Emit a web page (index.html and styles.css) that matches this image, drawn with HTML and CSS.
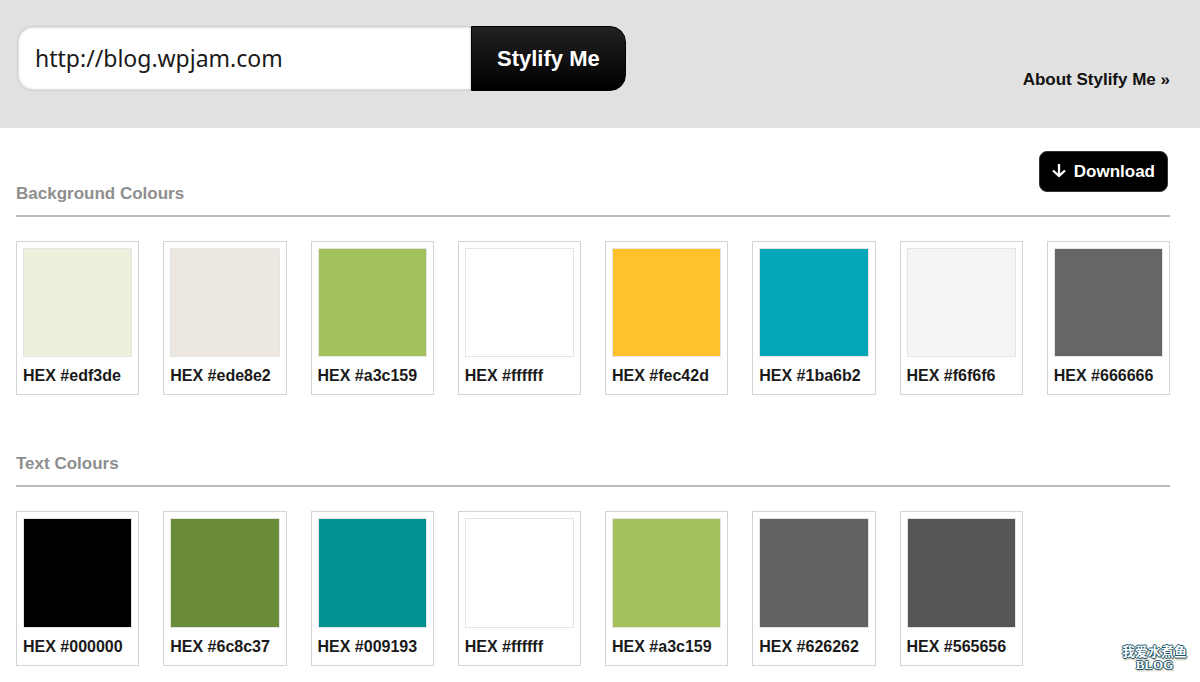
FILE: index.html
```html
<!DOCTYPE html>
<html lang="en">
<head>
<meta charset="utf-8">
<title>Stylify Me</title>
<link rel="stylesheet" href="styles.css">
</head>
<body>
<header class="header">
  <form class="search">
    <input class="search-input" type="text" aria-label="Website address" value="http://blog.wpjam.com">
    <button class="search-button" type="button">Stylify Me</button>
  </form>
  <a class="about" href="#">About Stylify Me »</a>
</header>
<main class="main">
  <section class="section">
    <div class="section-head">
      <h2 class="section-title">Background Colours</h2>
      <button class="download" type="button">
        <svg class="download-icon" width="14" height="16" viewBox="0 0 14 16" aria-hidden="true"><path d="M7 0v12M1 6.500L7 12l6-5.500" fill="none" stroke="#fff" stroke-width="2.300"/></svg>
        Download
      </button>
    </div>
    <ul class="swatches">
      <li class="card"><div class="colour c-edf3de"></div><span class="label">HEX #edf3de</span></li>
      <li class="card"><div class="colour c-ede8e2"></div><span class="label">HEX #ede8e2</span></li>
      <li class="card"><div class="colour c-a3c159"></div><span class="label">HEX #a3c159</span></li>
      <li class="card"><div class="colour c-ffffff"></div><span class="label">HEX #ffffff</span></li>
      <li class="card"><div class="colour c-fec42d"></div><span class="label">HEX #fec42d</span></li>
      <li class="card"><div class="colour c-1ba6b2"></div><span class="label">HEX #1ba6b2</span></li>
      <li class="card"><div class="colour c-f6f6f6"></div><span class="label">HEX #f6f6f6</span></li>
      <li class="card"><div class="colour c-666666"></div><span class="label">HEX #666666</span></li>
    </ul>
  </section>
  <section class="section">
    <div class="section-head">
      <h2 class="section-title">Text Colours</h2>
    </div>
    <ul class="swatches">
      <li class="card"><div class="colour c-000000"></div><span class="label">HEX #000000</span></li>
      <li class="card"><div class="colour c-6c8c37"></div><span class="label">HEX #6c8c37</span></li>
      <li class="card"><div class="colour c-009193"></div><span class="label">HEX #009193</span></li>
      <li class="card"><div class="colour c-ffffff"></div><span class="label">HEX #ffffff</span></li>
      <li class="card"><div class="colour c-a3c159"></div><span class="label">HEX #a3c159</span></li>
      <li class="card"><div class="colour c-626262"></div><span class="label">HEX #626262</span></li>
      <li class="card"><div class="colour c-565656"></div><span class="label">HEX #565656</span></li>
    </ul>
  </section>
</main>
<div class="watermark"><span>我爱水煮鱼</span><span class="watermark-blog">BLOG</span></div>
</body>
</html>
```

FILE: styles.css
```css
* { box-sizing: border-box; }
body {
  margin: 0;
  background: #fff;
  color: #1a1a1a;
  font-family: "Liberation Sans", Arial, sans-serif;
  font-weight: bold;
}
.header {
  display: flex;
  justify-content: space-between;
  align-items: center;
  padding: 26px 30px 37px 17px;
  background: #e1e1e1;
}
.search { display: flex; height: 65px; }
.search-input {
  width: 454px;
  padding: 0 17px 2px;
  border: 1px solid #cfcfcf;
  border-right: 0;
  border-radius: 16px 0 0 16px;
  background: #fff;
  box-shadow: inset 0 0 3px #bbb;
  color: #1a1a1a;
  font: 23px "Noto Sans", sans-serif;
}
.search-button {
  padding: 0 25px;
  border: 1px solid #000;
  border-radius: 0 16px 16px 0;
  background: linear-gradient(#222, #000);
  color: #fff;
  font: bold 22px "Liberation Sans", Arial, sans-serif;
}
.about {
  margin-top: 42px;
  color: #111;
  font-size: 17px;
  text-decoration: none;
}
.main { padding: 19px 30px 0 16px; }
.section + .section { margin-top: 59px; }
.section-head {
  display: flex;
  justify-content: space-between;
  align-items: flex-end;
  border-bottom: 2px solid #b9b9b9;
}
.section-title {
  margin: 0;
  padding-bottom: 11px;
  color: #8e8e8e;
  font-size: 17px;
  line-height: 20px;
}
.download {
  display: flex;
  align-items: center;
  gap: 8px;
  height: 41px;
  margin: 4px 2px 23px 0;
  padding: 0 12px;
  border: 1px solid #333;
  border-radius: 8px;
  background: #000;
  color: #fff;
  font: bold 17px "Liberation Sans", Arial, sans-serif;
}
.swatches {
  display: grid;
  grid-template-columns: repeat(8, 1fr);
  gap: 24px;
  margin: 24px 0 0;
  padding: 0;
  list-style: none;
}
.card {
  padding: 6px;
  border: 1px solid #d4d4d4;
}
.colour {
  aspect-ratio: 1;
  border: 1px solid #e4e4e4;
}
.label {
  display: block;
  padding: 9px 0 2px;
  font-size: 16px;
  line-height: 20px;
  white-space: nowrap;
}
.c-edf3de { background: #ebf1dd; }
.c-ede8e2 { background: #ece7e1; }
.c-a3c159 { background: #a2c05c; }
.c-ffffff { background: #fff; }
.c-fec42d { background: #ffc22a; }
.c-1ba6b2 { background: #03a7b5; }
.c-f6f6f6 { background: #f5f5f5; }
.c-666666 { background: #666; }
.c-000000 { background: #000; }
.c-6c8c37 { background: #6a8b37; }
.c-009193 { background: #039193; }
.c-626262 { background: #626262; }
.c-565656 { background: #565656; }
.watermark {
  position: absolute;
  right: 13px;
  bottom: 10px;
  display: flex;
  flex-direction: column;
  align-items: center;
  color: #fff;
  font: bold 13px/14px "Noto Sans CJK SC", sans-serif;
  text-shadow: 1px 0 #17546b, -1px 0 #17546b, 0 1px #17546b, 0 -1px #17546b, 1px 2px 2px #b5a98c;
}
.watermark-blog { font: bold 13px/14px "Liberation Serif", serif; }
```
